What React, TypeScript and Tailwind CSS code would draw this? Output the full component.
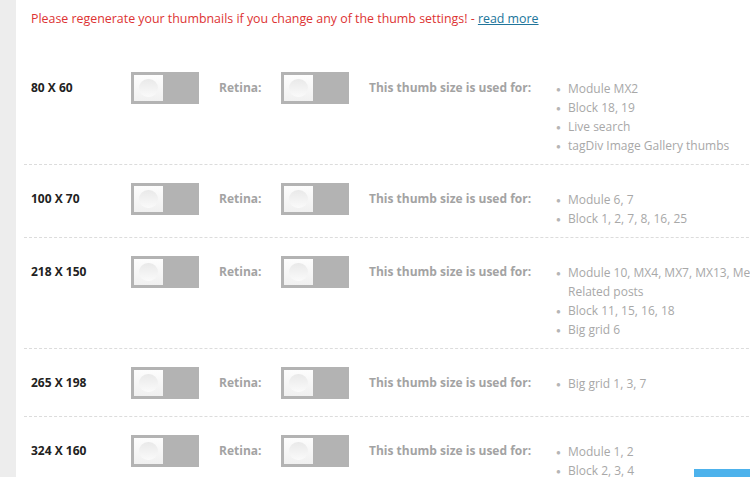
import React from 'react';

interface ThumbRow {
  size: string;
  usedFor: string[];
}

// "\n" marks where the admin column wraps a long entry
const rows: ThumbRow[] = [
  {
    size: '80 X 60',
    usedFor: ['Module MX2', 'Block 18, 19', 'Live search', 'tagDiv Image Gallery thumbs'],
  },
  { size: '100 X 70', usedFor: ['Module 6, 7', 'Block 1, 2, 7, 8, 16, 25'] },
  {
    size: '218 X 150',
    usedFor: ['Module 10, MX4, MX7, MX13, Mega menu,\nRelated posts', 'Block 11, 15, 16, 18', 'Big grid 6'],
  },
  { size: '265 X 198', usedFor: ['Big grid 1, 3, 7'] },
  { size: '324 X 160', usedFor: ['Module 1, 2', 'Block 2, 3, 4', 'Block 9'] },
];

// Off-state switch: grey track, white knob on the left
function Toggle() {
  return (
    <div className="flex h-[32px] w-[68px] shrink-0 bg-[#b3b3b3] p-[3px]">
      <div className="relative h-[26px] w-[29px] overflow-hidden bg-gradient-to-b from-[#fdfdfd] to-[#f0f0f0]">
        <div className="absolute left-[5px] top-[4px] h-[18px] w-[19px] rounded-full bg-gradient-to-b from-[#e9e9e9] to-[#fafafa]" />
      </div>
    </div>
  );
}

export default function App() {
  return (
    <div className="relative flex h-[477px] w-[750px] overflow-hidden bg-white font-['Open_Sans',sans-serif]">
      {/* Left admin gutter */}
      <div className="w-[16px] shrink-0 bg-[#ededed]" />

      <div className="min-w-0 flex-1 pl-[8px]">
        <p className="ml-[7px] mt-[10px] whitespace-nowrap text-[12.4px] leading-[17px] text-[#dd3333]">
          Please regenerate your thumbnails if you change any of the thumb settings! -{' '}
          <a className="text-[#21759b] underline">read more</a>
        </p>

        <div className="mt-[27px]">
          {rows.map((row) => (
            <div
              key={row.size}
              className="flex w-[760px] items-start border-b border-dashed border-[#dcdcdc] pb-[17px] pt-[18px]"
            >
              <div className="w-[107px] shrink-0 pl-[7px] pt-[8px] text-[12px] font-bold leading-[16px] text-[#222]">
                {row.size}
              </div>
              <Toggle />
              <div className="w-[82px] shrink-0 pl-[20px] pt-[7px] text-[12px] font-bold leading-[18px] text-[#a3a3a3]">
                Retina:
              </div>
              <Toggle />
              <div className="w-[206px] shrink-0 whitespace-nowrap pl-[20px] pt-[7px] text-[12px] font-bold leading-[18px] text-[#a3a3a3]">
                This thumb size is used for:
              </div>
              <ul className="-mb-[8px] mt-[7px] w-[200px] text-[12px] leading-[19px] text-[#a8a8a8]">
                {row.usedFor.map((item) => (
                  <li key={item} className="flex">
                    <span className="w-[13px] shrink-0 pl-[1px] text-[8px] text-[#b5b5b5]">●</span>
                    <span className="whitespace-pre">{item}</span>
                  </li>
                ))}
              </ul>
            </div>
          ))}
        </div>
      </div>

      {/* Floating save button peeking in at the bottom */}
      <div className="absolute bottom-0 right-0 h-[8px] w-[56px] bg-[#4db2ec]" />
    </div>
  );
}
